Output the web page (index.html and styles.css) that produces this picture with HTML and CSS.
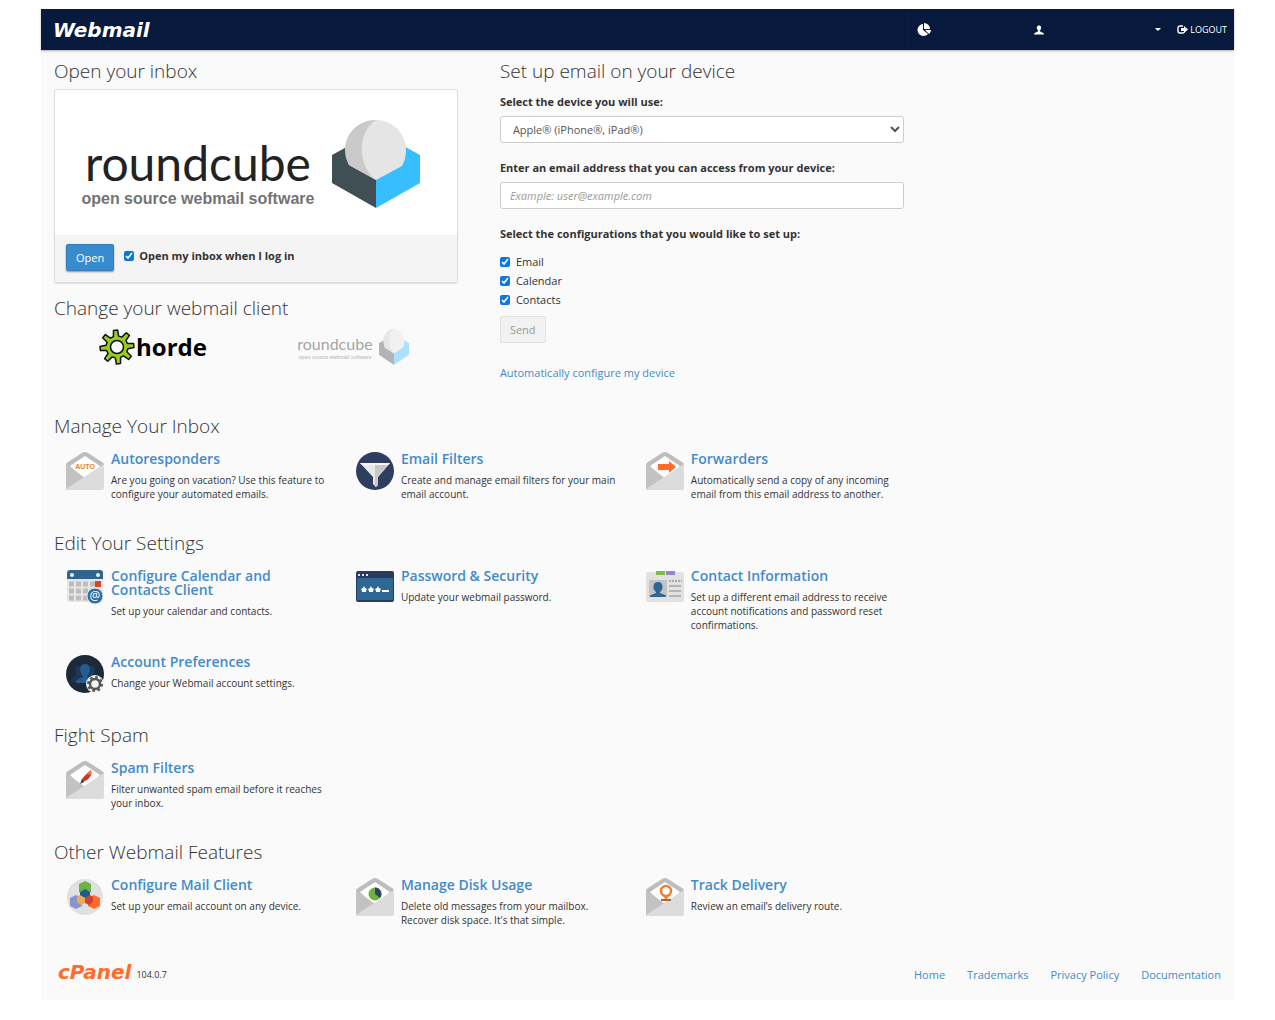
FILE: index.html
```html
<!DOCTYPE html>
<html lang="en">
<head>
  <meta charset="UTF-8">
  <meta name="viewport" content="width=device-width, initial-scale=1.0">
  <title>Webmail</title>
  <link rel="stylesheet" href="styles.css">
</head>
<body>
  <!-- Shared drawings -->
  <svg class="sprite" aria-hidden="true">
    <symbol id="envelope" viewBox="0 0 38 38">
      <path d="M0 13q0-2 2-3L16 1q3-2 6 0l14 9q2 1 2 3v14H0z" fill="#bdbdbd"/>
      <path d="M4 14L19 4l15 10-15 15z" fill="#fff"/>
      <path d="M0 12l19 14L0 38z" fill="#c2c2c2"/>
      <path d="M38 12v24q0 2-2 2H1q-1 0-1-1z" fill="#dcdcdc"/>
    </symbol>
    <symbol id="cube" viewBox="0 0 88 88" preserveAspectRatio="none">
      <path d="M0 35l44-24v77L0 63z" fill="#404f54"/>
      <path d="M88 35L44 11v77l44-25z" fill="#37beff"/>
      <path d="M14 30a30 30 0 0 1 60 0q0 9-4 16L44 60 17 45q-3-7-3-15z" fill="#e5e5e5"/>
      <path d="M44 0C25 12 25 46 44 60L17 45A30 30 0 0 1 44 0z" fill="#cacaca"/>
    </symbol>
  </svg>

  <div class="page">
    <header class="header">
      <a href="#" class="logo">Webmail</a>
      <nav class="nav">
        <a href="#" class="nav-item nav-stats" aria-label="Usage statistics">
          <svg width="15" height="14" viewBox="0 0 15 14"><path d="M7 1v6l5 4A6 6 0 1 1 7 1z" fill="#fff"/><path d="M8 0a6 6 0 0 1 6 6H8z" fill="#fff"/><path d="M9 7h6q0 2-2 4z" fill="#fff"/></svg>
        </a>
        <button class="nav-item nav-user" aria-label="Account menu">
          <svg width="10" height="10" viewBox="0 0 12 11"><path d="M6 0c3 0 3 3 2 5l-1 1v1l4 2q1 0 1 2H0q0-2 1-2l4-2V6L4 5C3 3 3 0 6 0z" fill="#fff"/></svg>
          <svg width="6" height="3" viewBox="0 0 6 3"><path d="M0 0h6L3 3z" fill="#fff"/></svg>
        </button>
        <a href="#" class="nav-item nav-logout">
          <svg width="11" height="9" viewBox="0 0 11 9"><path d="M6 1H3Q1 1 1 3v3q0 2 2 2h3q1 0 1-1" fill="none" stroke="#fff" stroke-width="1.4"/><path d="M4 3h3V1l4 3.500L7 8V6H4z" fill="#fff"/></svg>
          LOGOUT
        </a>
      </nav>
    </header>

    <main class="main">
      <div class="top">
        <section>
          <h2>Open your inbox</h2>
          <div class="panel">
            <div class="panel-logo">
              <div class="roundcube">
                <div class="roundcube-name">roundcube</div>
                <div class="roundcube-tag">open source webmail software</div>
              </div>
              <svg class="roundcube-cube"><use href="#cube"/></svg>
            </div>
            <div class="panel-footer">
              <button class="btn btn-primary">Open</button>
              <label class="default-label"><input type="checkbox" checked> Open my inbox when I log in</label>
            </div>
          </div>

          <h2>Change your webmail client</h2>
          <div class="clients">
            <a href="#" class="client horde">
              <svg width="36" height="36" viewBox="0 0 36 36">
                <path d="M28.400 14.400L34.600 14.500 35 18.600 28.900 19.700 27.900 22.800 32.300 27.300 29.600 30.400 24.500 26.900 21.600 28.400 21.500 34.600 17.400 35 16.300 28.900 13.200 27.900 8.700 32.300 5.600 29.600 9.100 24.500 7.600 21.600 1.400 21.500 1 17.400 7.100 16.300 8.100 13.200 3.700 8.700 6.400 5.600 11.500 9.100 14.400 7.600 14.500 1.400 18.600 1 19.700 7.100 22.800 8.100 27.300 3.700 30.400 6.400 26.900 11.500z" fill="#9c2" stroke="#111" stroke-width="1.500" stroke-linejoin="round"/>
                <circle cx="18" cy="18" r="6.500" fill="#fafafa" stroke="#111" stroke-width="1.500"/>
              </svg>
              <span>horde</span>
            </a>
            <a href="#" class="client small-roundcube">
              <span class="roundcube">
                <span class="roundcube-name">roundcube</span>
                <span class="roundcube-tag">open source webmail software</span>
              </span>
              <svg class="roundcube-cube"><use href="#cube"/></svg>
            </a>
          </div>
        </section>

        <section>
          <h2>Set up email on your device</h2>
          <form class="device-form">
            <label class="field-label" for="device">Select the device you will use:</label>
            <select id="device" class="field">
              <option>Apple® (iPhone®, iPad®)</option>
            </select>
            <label class="field-label" for="email">Enter an email address that you can access from your device:</label>
            <input id="email" class="field" type="email" placeholder="Example: user@example.com">
            <fieldset class="checks">
              <legend class="field-label">Select the configurations that you would like to set up:</legend>
              <label><input type="checkbox" checked> Email</label>
              <label><input type="checkbox" checked> Calendar</label>
              <label><input type="checkbox" checked> Contacts</label>
            </fieldset>
            <button class="btn btn-send" type="button" disabled>Send</button>
          </form>
          <a href="#" class="auto-link">Automatically configure my device</a>
        </section>
      </div>

      <section class="features">
        <h2>Manage Your Inbox</h2>
        <div class="feature-grid">
          <div class="feature">
            <svg class="icon" viewBox="0 0 38 38"><use href="#envelope"/><text x="19" y="17" class="auto-text">AUTO</text></svg>
            <div>
              <h3><a href="#">Autoresponders</a></h3>
              <p>Are you going on vacation? Use this feature to configure your automated emails.</p>
            </div>
          </div>
          <div class="feature">
            <svg class="icon" viewBox="0 0 38 38">
              <circle cx="19" cy="19" r="19" fill="#2e3d60"/>
              <path d="M4 11h30L22 25v8l-2 2-3-3v-7z" fill="#e8e8e8"/>
              <path d="M19 11h15L22 25v8l-2 2h-1z" fill="#c8c8c8"/>
              <path d="M4 11h30l-2 2H6z" fill="#f7f7f7"/>
            </svg>
            <div>
              <h3><a href="#">Email Filters</a></h3>
              <p>Create and manage email filters for your main email account.</p>
            </div>
          </div>
          <div class="feature">
            <svg class="icon" viewBox="0 0 38 38"><use href="#envelope"/><path d="M12 12h11V9l7 6-7 6v-3H12z" fill="#ff6c2c"/></svg>
            <div>
              <h3><a href="#">Forwarders</a></h3>
              <p>Automatically send a copy of any incoming email from this email address to another.</p>
            </div>
          </div>
        </div>
      </section>

      <section class="features">
        <h2>Edit Your Settings</h2>
        <div class="feature-grid">
          <div class="feature">
            <svg class="icon" viewBox="0 0 38 38">
              <path d="M1 10h36v21q0 2-2 2H3q-2 0-2-2z" fill="#e6e6e6"/>
              <path d="M1 10V4q0-3 3-3h30q3 0 3 3v6z" fill="#2f6592"/>
              <circle cx="6" cy="6" r="2" fill="#e8f2fa"/><circle cx="32" cy="6" r="2" fill="#e8f2fa"/>
              <path d="M3 15h31M3 22h31M3 29h31" stroke="#bdbdbd" stroke-width="5" stroke-dasharray="5 2"/>
              <path d="M29 12h6v6h-6z" fill="#d9452f"/>
              <circle cx="29" cy="27" r="8" fill="#2f6da3" stroke="#e6e6e6"/>
              <text x="29" y="31" class="at-text">@</text>
            </svg>
            <div>
              <h3><a href="#">Configure Calendar and Contacts Client</a></h3>
              <p>Set up your calendar and contacts.</p>
            </div>
          </div>
          <div class="feature">
            <svg class="icon" viewBox="0 0 38 38">
              <rect y="2" width="38" height="31" rx="2" fill="#293a5b"/>
              <path d="M1 9h36v22H1z" fill="#2f6794"/>
              <path d="M2 6h2M6 6h2M10 6h2" stroke="#dce4ee" stroke-width="2"/>
              <path d="M8 17l1 2 2 1-1 2v1H6v-1l-1-2 2-1zM15 17l1 2 2 1-1 2v1h-4v-1l-1-2 2-1zM22 17l1 2 2 1-1 2v1h-4v-1l-1-2 2-1zM26 21h7v2h-7z" fill="#fff"/>
            </svg>
            <div>
              <h3><a href="#">Password &amp; Security</a></h3>
              <p>Update your webmail password.</p>
            </div>
          </div>
          <div class="feature">
            <svg class="icon" viewBox="0 0 38 38">
              <rect y="3" width="38" height="30" rx="2" fill="#e2e2e2"/>
              <path d="M10 2h9v4h-9z" fill="#80bd43"/><path d="M20 2h9v4h-9z" fill="#9685c9"/>
              <path d="M3 11h18v17H3z" fill="#c4c4c4"/>
              <path d="M12 13c5 0 5 5 4 8l-2 2v1l5 2q1 0 1 2H4q0-2 1-2l5-2v-1l-2-2c-1-3-1-8 4-8z" fill="#2f6794"/>
              <path d="M23 12h13" stroke="#aaa" stroke-width="2" stroke-dasharray="2 1"/>
              <path d="M23 17h12M23 22h12M23 27h12" stroke="#b3b3b3" stroke-width="2"/>
            </svg>
            <div>
              <h3><a href="#">Contact Information</a></h3>
              <p>Set up a different email address to receive account notifications and password reset confirmations.</p>
            </div>
          </div>
          <div class="feature">
            <svg class="icon" viewBox="0 0 38 38">
              <circle cx="19" cy="19" r="19" fill="#1c2938"/>
              <path d="M5 27c0-4 3-5 6-6-2-2-3-10 1-10 2 0 3 1 3 3l8 0c0-2 1-3 3-3 4 0 3 8 1 10 3 1 6 2 6 6z" fill="#1d3754"/>
              <path d="M19 9c5 0 6 5 4 9l-2 4 6 3v3H10c0-3 2-4 7-6l-2-4c-2-4-1-9 4-9z" fill="#255c91"/>
              <circle cx="29" cy="29" r="9" fill="#f2f2f2"/>
              <circle cx="29" cy="29" r="5" fill="none" stroke="#555" stroke-width="2.500"/>
              <circle cx="29" cy="29" r="7" fill="none" stroke="#555" stroke-width="2" stroke-dasharray="2.750 2.750"/>
            </svg>
            <div>
              <h3><a href="#">Account Preferences</a></h3>
              <p>Change your Webmail account settings.</p>
            </div>
          </div>
        </div>
      </section>

      <section class="features">
        <h2>Fight Spam</h2>
        <div class="feature-grid">
          <div class="feature">
            <svg class="icon" viewBox="0 0 38 38"><use href="#envelope"/><path d="M25 9q2 5-4 10l-6 3 1-4q4-5 9-9z" fill="#c8362b"/><path d="M25 9l0 4-4 1z" fill="#ff7a35"/><path d="M16 18l2 3-4 2z" fill="#263b63"/></svg>
            <div>
              <h3><a href="#">Spam Filters</a></h3>
              <p>Filter unwanted spam email before it reaches your inbox.</p>
            </div>
          </div>
        </div>
      </section>

      <section class="features">
        <h2>Other Webmail Features</h2>
        <div class="feature-grid">
          <div class="feature">
            <svg class="icon" viewBox="0 0 38 38">
              <circle cx="19" cy="19" r="18" fill="#e0e0e0"/>
              <path d="M19 3l6 3v8l-6 4-6-4V6z" fill="#6fb244"/>
              <path d="M10 17l6 3v8l-6 3-6-3v-8z" fill="#8795cc"/>
              <path d="M28 17l6 3v8l-6 3-6-3v-8z" fill="#ff6c2c"/>
              <path d="M19 11l5 3v4l-5 2-5-2v-4z" fill="#245b8c"/>
              <path d="M14 17l5 3v5l-4 2-4-3v-5z" fill="#f0a95a"/>
              <path d="M24 17l-5 3v5l4 2 4-3v-5z" fill="#cf4134"/>
            </svg>
            <div>
              <h3><a href="#">Configure Mail Client</a></h3>
              <p>Set up your email account on any device.</p>
            </div>
          </div>
          <div class="feature">
            <svg class="icon" viewBox="0 0 38 38"><use href="#envelope"/><circle cx="19" cy="16" r="6.500" fill="#6fb23e"/><path d="M19 16V9.500A6.500 6.500 0 0 1 24 20z" fill="#2b4170"/></svg>
            <div>
              <h3><a href="#">Manage Disk Usage</a></h3>
              <p>Delete old messages from your mailbox. Recover disk space. It's that simple.</p>
            </div>
          </div>
          <div class="feature">
            <svg class="icon" viewBox="0 0 38 38"><use href="#envelope"/><circle cx="20" cy="13" r="5" fill="#fff" stroke="#f47b30" stroke-width="2.500"/><path d="M17 17h6l-2 4h-2z" fill="#f47b30"/><path d="M15 21h10v2H15z" fill="#b5632f"/></svg>
            <div>
              <h3><a href="#">Track Delivery</a></h3>
              <p>Review an email’s delivery route.</p>
            </div>
          </div>
        </div>
      </section>
    </main>

    <footer class="footer">
      <a href="#" class="cpanel">cPanel</a>
      <span class="version">104.0.7</span>
      <nav class="footer-links">
        <a href="#">Home</a>
        <a href="#">Trademarks</a>
        <a href="#">Privacy Policy</a>
        <a href="#">Documentation</a>
      </nav>
    </footer>
  </div>
</body>
</html>
```
FILE: styles.css
```css
* {
  margin: 0;
  padding: 0;
  box-sizing: border-box;
}

body {
  padding: 9px 41px 20px;
  background: #fff;
  color: #333;
  font-family: 'Open Sans', sans-serif;
  font-size: 11px;
  line-height: 18px;
}

a {
  color: #428bca;
  text-decoration: none;
}

a:hover {
  text-decoration: underline;
}

.sprite {
  position: absolute;
  width: 0;
  height: 0;
}

.page {
  background: #fafafa;
}

/* Header */
.header {
  display: flex;
  align-items: center;
  justify-content: space-between;
  height: 41px;
  padding-left: 12px;
  background: #08193e;
  box-shadow: 0 1px 2px rgba(0, 0, 0, 0.3);
}

.logo {
  color: #fff;
  font-family: 'DejaVu Sans', sans-serif;
  font-size: 20px;
  font-weight: bold;
  font-style: italic;
}

.nav {
  display: flex;
  align-self: stretch;
}

.nav-item {
  display: flex;
  align-items: center;
  padding: 0 8px;
  background: none;
  border: none;
  border-left: 1px solid #0b1c40;
  color: #fff;
}

.nav-stats {
  min-width: 118px;
}

.nav-user {
  justify-content: space-between;
  min-width: 144px;
}

.nav-logout {
  gap: 2px;
  padding: 0 7px;
  font-size: 9px;
}

/* Content */
.main {
  width: 75%;
  padding: 8px 12px 0 13px;
}

h2 {
  font-size: 19px;
  font-weight: 350;
  line-height: 26px;
}

.top {
  display: grid;
  grid-template-columns: 1fr 1fr;
  gap: 42px;
  padding-right: 20px;
  margin-bottom: 25px;
}

.panel {
  margin: 5px 0 12px;
  background: #fff;
  border: 1px solid #ddd;
  border-radius: 3px;
  box-shadow: 0 1px 1px rgba(0, 0, 0, 0.1);
}

.panel-logo {
  display: flex;
  align-items: flex-end;
  justify-content: center;
  gap: 18px;
  padding: 30px 10px 27px 0;
}

.roundcube {
  text-align: center;
}

.roundcube-name {
  color: #222;
  font-family: Lato, sans-serif;
  font-size: 48px;
  line-height: 54px;
}

.roundcube-tag {
  color: #737373;
  font-family: 'Liberation Sans', sans-serif;
  font-size: 16px;
  font-weight: bold;
  line-height: 18px;
}

.roundcube-cube {
  width: 88px;
  height: 88px;
}

.panel-footer {
  display: flex;
  align-items: flex-start;
  gap: 10px;
  padding: 8px 11px 11px;
  background: #f4f4f4;
  border-top: 1px solid #eee;
}

.btn {
  padding: 4px 9px;
  border: 1px solid #357ebd;
  border-radius: 2px;
  font: inherit;
  line-height: 17px;
}

.btn-primary {
  background: #398bcf;
  color: #fff;
  box-shadow: 0 1px 2px rgba(0, 0, 0, 0.4);
}

.btn-send {
  margin-top: 7px;
  background: #f2f2f2;
  border-color: #e2e2e2;
  color: #999;
}

input[type="checkbox"] {
  width: 10px;
  height: 10px;
  margin: 0;
  accent-color: #0f75e0;
}

.default-label {
  display: flex;
  align-items: center;
  gap: 5px;
  padding-top: 3px;
  font-weight: 700;
}

.clients {
  display: grid;
  grid-template-columns: 1fr 1fr;
  padding-top: 8px;
}

.client {
  display: flex;
  align-items: center;
  justify-content: center;
}

.client:hover {
  text-decoration: none;
}

.horde {
  gap: 1px;
  padding-right: 4px;
  color: #000;
  font-size: 24px;
  font-weight: 700;
}

.small-roundcube {
  gap: 6px;
  padding-right: 8px;
  opacity: 0.4;
}

.small-roundcube .roundcube span {
  display: block;
}

.small-roundcube .roundcube-name {
  font-size: 16px;
  line-height: 20px;
}

.small-roundcube .roundcube-tag {
  font-size: 5px;
  line-height: 7px;
}

.small-roundcube .roundcube-cube {
  width: 30px;
  height: 36px;
}

/* Device form */
.field-label {
  display: block;
  margin-bottom: 5px;
  font-weight: 700;
}

.device-form {
  padding-top: 9px;
}

.field {
  display: block;
  width: 100%;
  height: 27px;
  margin-bottom: 16px;
  padding: 0 9px;
  background: #fff;
  border: 1px solid #ccc;
  border-radius: 3px;
  color: #555;
  font: inherit;
}

select.field {
  padding: 0 0 0 8px;
}

.field::placeholder {
  color: #999;
  font-style: italic;
}

.checks {
  border: none;
}

.checks legend {
  margin-bottom: 9px;
}

.checks label {
  display: flex;
  align-items: center;
  gap: 6px;
  line-height: 19px;
}

.auto-link {
  display: block;
  margin-top: 21px;
}

/* Feature groups */
.features h2 {
  padding-top: 6px;
  margin-bottom: 13px;
}

.feature-grid {
  display: grid;
  grid-template-columns: repeat(3, 1fr);
}

.feature {
  display: flex;
  gap: 7px;
  padding: 0 15px 23px 12px;
}

.icon {
  flex: none;
  width: 38px;
  height: 38px;
}

.feature h3 {
  margin-bottom: 7px;
  font-size: 14px;
  font-weight: 600;
  line-height: 14px;
}

.feature p {
  font-size: 10px;
  line-height: 14px;
}

.auto-text {
  fill: #f47b30;
  font-family: 'Liberation Sans', sans-serif;
  font-size: 7px;
  font-weight: bold;
  text-anchor: middle;
}

.at-text {
  fill: #fff;
  font-size: 12px;
  text-anchor: middle;
}

/* Footer */
.footer {
  display: flex;
  align-items: flex-end;
  gap: 5px;
  padding: 10px 13px 16px 17px;
}

.cpanel {
  color: #ff6c2c;
  font-family: 'DejaVu Sans', sans-serif;
  font-size: 20px;
  font-weight: bold;
  font-style: italic;
  line-height: 24px;
}

.version {
  font-size: 9px;
}

.footer-links {
  display: flex;
  gap: 22px;
  margin-left: auto;
}
```
